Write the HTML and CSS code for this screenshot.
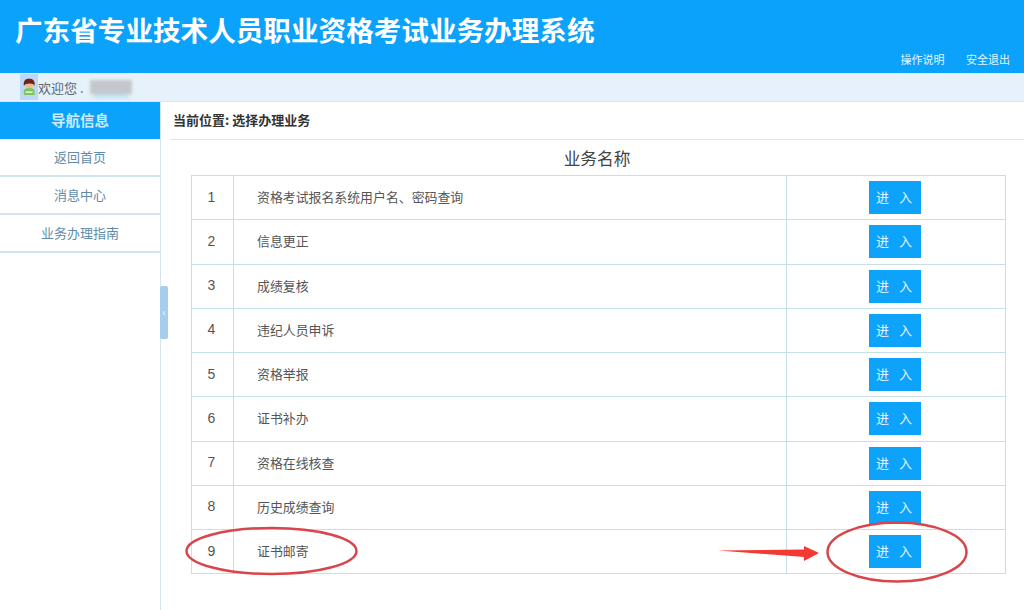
FILE: index.html
```html
<!DOCTYPE html>
<html lang="zh-CN">
<head>
    <meta charset="UTF-8">
    <title>广东省专业技术人员职业资格考试业务办理系统</title>
    <link rel="stylesheet" href="styles.css">
</head>
<body>
    <div class="header">
        <div class="site-title">广东省专业技术人员职业资格考试业务办理系统</div>
        <div class="header-links">
            <a href="#">操作说明</a>
            <a href="#">安全退出</a>
        </div>
    </div>

    <div class="welcome">
        <span class="avatar">
            <svg width="18" height="26" viewBox="0 0 18 26">
                <path d="M3.8 21 V17 C3.8 15 6 14 9 14 C12 14 14.6 15 14.6 17 V21 Z" fill="#7cc45c"/>
                <rect x="5.6" y="17.4" width="7" height="1.5" fill="#e8f5d0"/>
                <circle cx="9.2" cy="10" r="4.2" fill="#eebd8a"/>
                <path d="M3.9 12 C3 6.4 5.8 4.8 9.2 4.8 C12.6 4.8 15.4 6.4 14.5 12 C13.8 10 12.4 9.4 9.6 9.4 C7 9.4 4.8 10 3.9 12 Z" fill="#6e241c"/>
            </svg>
        </span>
        <span>欢迎您 .</span>
        <span class="masked"></span>
    </div>

    <div class="content">
        <div class="sidebar">
            <div class="nav-title">导航信息</div>
            <a class="nav-item" href="#">返回首页</a>
            <a class="nav-item" href="#">消息中心</a>
            <a class="nav-item" href="#">业务办理指南</a>
            <div class="collapse-handle">‹</div>
        </div>

        <div class="main">
            <div class="crumb">当前位置: 选择办理业务</div>
            <div class="table-title">业务名称</div>
            <table class="biz-table">
                <colgroup>
                    <col class="col-no">
                    <col>
                    <col class="col-action">
                </colgroup>
                <tr><td class="no">1</td><td class="name">资格考试报名系统用户名、密码查询</td><td class="action"><a class="enter" href="#">进 入</a></td></tr>
                <tr><td class="no">2</td><td class="name">信息更正</td><td class="action"><a class="enter" href="#">进 入</a></td></tr>
                <tr><td class="no">3</td><td class="name">成绩复核</td><td class="action"><a class="enter" href="#">进 入</a></td></tr>
                <tr><td class="no">4</td><td class="name">违纪人员申诉</td><td class="action"><a class="enter" href="#">进 入</a></td></tr>
                <tr><td class="no">5</td><td class="name">资格举报</td><td class="action"><a class="enter" href="#">进 入</a></td></tr>
                <tr><td class="no">6</td><td class="name">证书补办</td><td class="action"><a class="enter" href="#">进 入</a></td></tr>
                <tr><td class="no">7</td><td class="name">资格在线核查</td><td class="action"><a class="enter" href="#">进 入</a></td></tr>
                <tr><td class="no">8</td><td class="name">历史成绩查询</td><td class="action"><a class="enter" href="#">进 入</a></td></tr>
                <tr><td class="no">9</td><td class="name">证书邮寄</td><td class="action"><a class="enter" href="#">进 入</a></td></tr>
            </table>
        </div>
    </div>

    <!-- red marks drawn over the screenshot -->
    <svg class="marks" width="1024" height="610" viewBox="0 0 1024 610">
        <ellipse cx="271.5" cy="551" rx="85" ry="23" fill="none" stroke="#d9454a" stroke-width="2.5"/>
        <ellipse cx="897" cy="552" rx="69.5" ry="29.5" fill="none" stroke="#d9454a" stroke-width="2.5"/>
        <path d="M718 550.5 L804 549.5 L804 546 L819 553 L804 561 L804 557 Z" fill="#f23a33"/>
    </svg>
</body>
</html>
```

FILE: styles.css
```css
html, body { margin: 0; padding: 0; }
body {
    width: 1024px;
    height: 610px;
    overflow: hidden;
    position: relative;
    background: #fff;
    font-family: "Noto Sans CJK SC", "Liberation Sans", sans-serif;
    color: #555;
}
a { text-decoration: none; }

.header {
    height: 73px;
    background: #0ba2fc;
    display: flex;
    justify-content: space-between;
    padding: 0 14px 0 15px;
    box-sizing: border-box;
}
.site-title {
    margin-top: 9px;
    font-size: 27.6px;
    line-height: 40px;
    font-weight: 700;
    color: #fff;
}
.header-links {
    display: flex;
    gap: 21.5px;
    align-items: flex-end;
    padding-bottom: 6px;
}
.header-links a { color: #e6f5ff; font-size: 11px; line-height: 16px; }

.welcome {
    height: 29px;
    background: #e7f1fb;
    border-bottom: 1px solid #dde4ea;
    box-sizing: border-box;
    display: flex;
    align-items: center;
    padding-left: 20px;
    font-size: 13px;
    color: #5c6670;
}
.avatar { width: 18px; height: 26px; background: #bcd8f4; display: block; }
.avatar svg { display: block; }
.masked {
    width: 42px;
    height: 14px;
    margin-left: 6px;
    background: #c4c8cd;
    box-shadow: 0 7px 3px -3px #bfe0f5;
    filter: blur(1.5px);
}

.content { display: flex; height: 508px; }

.sidebar {
    width: 161px;
    flex: none;
    box-sizing: border-box;
    border-right: 1px solid #d3e6ec;
    position: relative;
}
.nav-title {
    height: 37px;
    background: #0ba2fc;
    color: #cfeaff;
    font-size: 14.5px;
    font-weight: 700;
    line-height: 36px;
    text-align: center;
}
.nav-item {
    display: block;
    height: 38px;
    line-height: 35px;
    box-sizing: border-box;
    border-bottom: 2px solid #cfe6ec;
    text-align: center;
    font-size: 13px;
    color: #5f8cab;
}
.collapse-handle {
    position: absolute;
    left: 160px;
    top: 184px;
    width: 8px;
    height: 53px;
    border-radius: 2px;
    background: #a5cdee;
    color: #fff;
    font-size: 10px;
    line-height: 52px;
    text-align: center;
}

.main { flex: 1; min-width: 0; }
.crumb {
    margin-left: 9px;
    height: 38px;
    line-height: 36px;
    padding-left: 3px;
    box-sizing: border-box;
    border-bottom: 1px solid #dfe7ea;
    font-size: 13px;
    font-weight: 700;
    color: #333;
}
.table-title {
    height: 35px;
    line-height: 36px;
    text-align: center;
    font-size: 16.7px;
    color: #444;
    padding-left: 9px;
}
.biz-table {
    margin-left: 30px;
    width: 815px;
    table-layout: fixed;
    border-collapse: collapse;
}
.col-no { width: 42px; }
.col-action { width: 219px; }
.biz-table td {
    box-sizing: border-box;
    height: 44.25px;
    padding: 0;
    border: 1px solid #c6e0e8;
    font-size: 12.9px;
    color: #555;
}
.biz-table .no {
    text-align: center;
    font-family: "Liberation Sans", sans-serif;
    font-size: 14px;
    padding: 0 2px 2px 0;
}
.biz-table .name { padding: 0 0 2px 23px; }
.biz-table .action { text-align: center; padding-right: 3px; }
.enter {
    display: inline-block;
    vertical-align: middle;
    width: 52px;
    height: 33px;
    line-height: 32px;
    background: #0ea3fa;
    color: #e6f5ff;
    font-size: 13px;
    letter-spacing: 1px;
    word-spacing: 5px;
    text-align: center;
}

.marks { position: absolute; left: 0; top: 0; pointer-events: none; }
```
